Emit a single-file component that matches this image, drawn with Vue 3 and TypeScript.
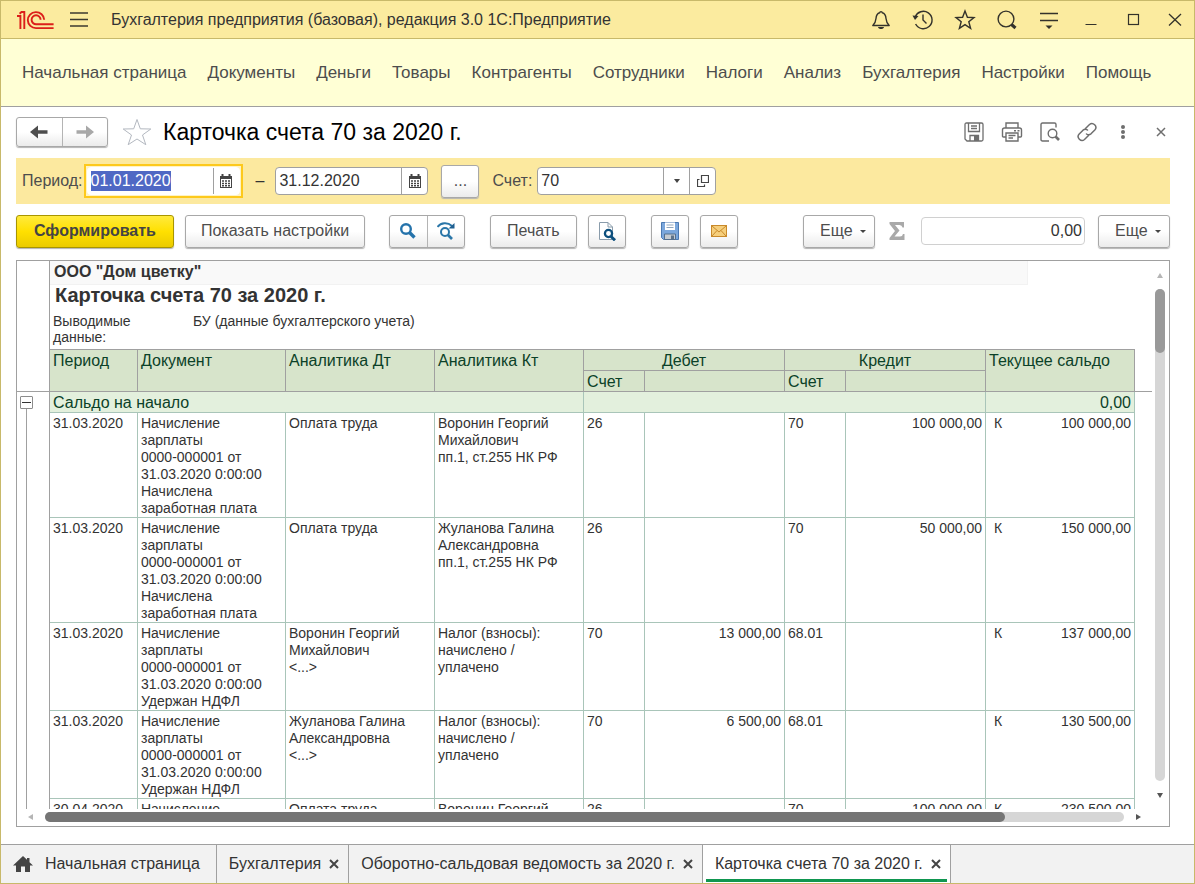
<script setup lang="ts">
import { onMounted, ref } from 'vue'

interface Entry {
  date: string
  doc: string[]
  dt: string[]
  kt: string[]
  debitAccount: string
  debit: string
  creditAccount: string
  credit: string
  side: string
  balance: string
}

const menu: string[] = [
  'Начальная страница', 'Документы', 'Деньги', 'Товары', 'Контрагенты', 'Сотрудники',
  'Налоги', 'Анализ', 'Бухгалтерия', 'Настройки', 'Помощь',
]

const payroll: string[] = [
  'Начисление', 'зарплаты', '0000-000001 от', '31.03.2020 0:00:00', 'Начислена', 'заработная плата',
]
const tax: string[] = [
  'Начисление', 'зарплаты', '0000-000001 от', '31.03.2020 0:00:00', 'Удержан НДФЛ',
]

const entries: Entry[] = [
  {
    date: '31.03.2020', doc: payroll, dt: ['Оплата труда'],
    kt: ['Воронин Георгий', 'Михайлович', 'пп.1, ст.255 НК РФ'],
    debitAccount: '26', debit: '', creditAccount: '70', credit: '100 000,00', side: 'К', balance: '100 000,00',
  },
  {
    date: '31.03.2020', doc: payroll, dt: ['Оплата труда'],
    kt: ['Жуланова Галина', 'Александровна', 'пп.1, ст.255 НК РФ'],
    debitAccount: '26', debit: '', creditAccount: '70', credit: '50 000,00', side: 'К', balance: '150 000,00',
  },
  {
    date: '31.03.2020', doc: tax, dt: ['Воронин Георгий', 'Михайлович', '<...>'],
    kt: ['Налог (взносы):', 'начислено /', 'уплачено'],
    debitAccount: '70', debit: '13 000,00', creditAccount: '68.01', credit: '', side: 'К', balance: '137 000,00',
  },
  {
    date: '31.03.2020', doc: tax, dt: ['Жуланова Галина', 'Александровна', '<...>'],
    kt: ['Налог (взносы):', 'начислено /', 'уплачено'],
    debitAccount: '70', debit: '6 500,00', creditAccount: '68.01', credit: '', side: 'К', balance: '130 500,00',
  },
  {
    date: '30.04.2020', doc: ['Начисление'], dt: ['Оплата труда'],
    kt: ['Воронин Георгий'],
    debitAccount: '26', debit: '', creditAccount: '70', credit: '100 000,00', side: 'К', balance: '230 500,00',
  },
]

const tabs = ref([
  { title: 'Бухгалтерия', active: false },
  { title: 'Оборотно-сальдовая ведомость за 2020 г.', active: false },
  { title: 'Карточка счета 70 за 2020 г.', active: true },
])

const dateFrom = ref('01.01.2020')
const dateTo = ref('31.12.2020')
const account = ref('70')
const total = ref('0,00')
const fromInput = ref<HTMLInputElement | null>(null)

onMounted(() => {
  fromInput.value?.focus()
  fromInput.value?.select()
})
</script>

<template>
  <div class="window">
    <header class="titlebar">
      <svg class="logo" width="38" height="20" viewBox="0 0 38 20" aria-label="1С">
        <g fill="none" stroke="#dc1f1a" stroke-width="1.9">
          <path d="M1 6H4.400V19" />
          <path d="M3.600 3.800L5.500 2H8.300V19" />
          <path d="M28.200 9.800A8.200 8 0 1 0 20.200 18.100H37.600" />
          <path d="M24.600 9.800A4.500 4.500 0 1 0 20.200 14.300H37.600" />
        </g>
      </svg>
      <button class="plain burger" aria-label="Меню">
        <svg width="18" height="15" viewBox="0 0 18 15"><path d="M0 1H18M0 7.5H18M0 14H18" fill="none" stroke="#3c3a30" stroke-width="1.3" /></svg>
      </button>
      <span class="app-title">Бухгалтерия предприятия (базовая), редакция 3.0 1С:Предприятие</span>
      <div class="system">
        <button class="plain" aria-label="Уведомления">
          <svg width="22" height="22" viewBox="0 0 22 22"><path d="M2.8 16.5H19.2C17 14.5 16.3 13 16 9.5C15.8 6 14.5 4.300 12.300 3.700C12.200 2.200 9.800 2.200 9.700 3.700C7.500 4.300 6.200 6 6 9.500C5.700 13 5 14.500 2.800 16.500Z" fill="none" stroke="#33322b" stroke-width="1.4" stroke-linejoin="round" /><path d="M8 18H14C13.500 20.700 8.500 20.700 8 18Z" fill="#33322b" /></svg>
        </button>
        <button class="plain" aria-label="История">
          <svg width="22" height="22" viewBox="0 0 22 22"><path d="M3.200 8A8.700 8.700 0 1 1 3.600 15" fill="none" stroke="#33322b" stroke-width="1.400" /><path d="M11 5.500V11L14.500 14.500" fill="none" stroke="#33322b" stroke-width="1.400" /><path d="M0.500 6.500L6.500 7L3 11Z" fill="#33322b" /></svg>
        </button>
        <button class="plain" aria-label="Избранное">
          <svg width="22" height="22" viewBox="0 0 22 22"><path d="M11 2L13.400 8.300L20 8.600L14.800 12.800L16.600 19.400L11 15.600L5.400 19.400L7.200 12.800L2 8.600L8.600 8.300Z" fill="none" stroke="#33322b" stroke-width="1.400" /></svg>
        </button>
        <button class="plain" aria-label="Поиск">
          <svg width="22" height="22" viewBox="0 0 22 22"><circle cx="10" cy="10" r="7.900" fill="none" stroke="#33322b" stroke-width="1.400" /><path d="M15.500 15.500L19.500 19" stroke="#33322b" stroke-width="3" /></svg>
        </button>
        <button class="plain" aria-label="Настройка панели">
          <svg width="22" height="22" viewBox="0 0 22 22"><path d="M2 4.500H20M2 11.500H20" fill="none" stroke="#33322b" stroke-width="1.500" /><path d="M7.500 16.500H14.500L11 20Z" fill="#33322b" /></svg>
        </button>
        <button class="plain" aria-label="Свернуть">
          <svg width="22" height="22" viewBox="0 0 22 22"><path d="M5.500 15.500H16.500" stroke="#33322b" /></svg>
        </button>
        <button class="plain" aria-label="Развернуть">
          <svg width="22" height="22" viewBox="0 0 22 22"><rect x="6.500" y="5.500" width="10" height="10" fill="none" stroke="#33322b" stroke-width="1.200" /></svg>
        </button>
        <button class="plain" aria-label="Закрыть">
          <svg width="22" height="22" viewBox="0 0 22 22"><path d="M5 5L17 16.500M17 5L5 16.500" stroke="#33322b" stroke-width="1.300" /></svg>
        </button>
      </div>
    </header>

    <nav class="menu">
      <a v-for="item in menu" :key="item" href="#">{{ item }}</a>
    </nav>

    <main class="content">
      <div class="page-head">
        <div class="group nav-group">
          <button aria-label="Назад">
            <svg width="18" height="14" viewBox="0 0 18 14"><path d="M0 7L8 0.500V5.300H17.500V8.700H8V13.500Z" fill="#4d4d4d" /></svg>
          </button>
          <button aria-label="Вперед">
            <svg width="18" height="14" viewBox="0 0 18 14"><path d="M18 7L10 0.500V5.300H0.500V8.700H10V13.500Z" fill="#a8a8a8" /></svg>
          </button>
        </div>
        <button class="plain favorite" aria-label="В избранное">
          <svg width="30" height="28" viewBox="0 0 30 28"><path d="M15 1.500L18.300 10.800L28.800 11L20.500 17L23.800 26.700L15 21L6.200 26.700L9.500 17L1.200 11L11.700 10.800Z" fill="none" stroke="#b3b8c0" /></svg>
        </button>
        <h1>Карточка счета 70 за 2020 г.</h1>
        <div class="page-tools">
          <button class="plain" aria-label="Сохранить">
            <svg width="20" height="20" viewBox="0 0 20 20"><g fill="none" stroke="#6e6e6e" stroke-width="1.300"><path d="M1 2.500Q1 1 2.500 1H17.500Q19 1 19 2.500V17.500Q19 19 17.500 19H3L1 17Z" /><path d="M4.500 1V9.500H15.500V1M7 4H13M7 6.500H13M6 19V13.500H14.500V19" /></g><path d="M10 14H14V19H10Z" fill="#6e6e6e" /></svg>
          </button>
          <button class="plain" aria-label="Печать">
            <svg width="22" height="20" viewBox="0 0 22 20"><g fill="none" stroke="#6e6e6e" stroke-width="1.400"><path d="M5 6V1H17V6M5 15H2.500Q1.500 15 1.500 14V8Q1.500 6 3.500 6H18.500Q20.500 6 20.500 8V14Q20.500 15 19.500 15H17" /><path d="M5 11H17V19H5ZM7.500 13.500H14.500M7.500 16H12" /></g><path d="M13 8H15V9.500H13ZM16.500 8H18.500V9.500H16.500Z" fill="#6e6e6e" /></svg>
          </button>
          <button class="plain" aria-label="Просмотр">
            <svg width="20" height="20" viewBox="0 0 20 20"><path d="M9 19H2.500Q1 19 1 17.500V2.500Q1 1 2.500 1H14.500Q16 1 16 2.500V5.500" fill="none" stroke="#6e6e6e" stroke-width="1.400" /><circle cx="12.500" cy="11.500" r="4.300" fill="none" stroke="#6e6e6e" stroke-width="1.400" /><path d="M15.500 14.500L19 18" stroke="#6e6e6e" stroke-width="2.600" /></svg>
          </button>
          <button class="plain" aria-label="Получить ссылку">
            <svg width="20" height="20" viewBox="0 0 20 20"><g fill="none" stroke="#6e6e6e" stroke-width="1.500" stroke-linecap="round"><path d="M8.500 6.500L12.500 2.500C16 -0.500 21 4.500 17.800 8L14 11.800C12.500 13 11 13 9.500 12" /><path d="M11.500 13.500L7.500 17.500C4 20.500 -1 15.500 2.200 12L6 8.200C7.500 7 9 7 10.500 8" /></g></svg>
          </button>
          <button class="plain" aria-label="Дополнительно">
            <svg width="6" height="16" viewBox="0 0 6 16"><g fill="#6e6e6e"><circle cx="3" cy="3" r="2" /><circle cx="3" cy="8" r="2" /><circle cx="3" cy="13" r="2" /></g></svg>
          </button>
          <button class="plain" aria-label="Закрыть карточку">
            <svg width="10" height="10" viewBox="0 0 10 10"><path d="M1 1L9 9M9 1L1 9" stroke="#6e6e6e" stroke-width="1.500" /></svg>
          </button>
        </div>
      </div>

      <div class="period">
        <label for="from">Период:</label>
        <div class="focus-ring">
          <div class="field">
            <input id="from" ref="fromInput" v-model="dateFrom" type="text" class="date" />
            <button aria-label="Выбрать начало периода">
              <svg width="12" height="14" viewBox="0 0 12 14"><path d="M0 2H12V14H0Z" fill="#444" /><path d="M2.500 0V3M9.500 0V3" stroke="#444" stroke-width="2" /><path d="M1 5H11V13H1Z" fill="#fff" /><path d="M2 7H4M5 7H7M8 7H10M2 9.500H4M5 9.500H7M8 9.500H10M2 11.800H4M5 11.800H7M8 11.800H10" stroke="#444" stroke-width="1.500" /></svg>
            </button>
          </div>
        </div>
        <label class="dash" for="to">–</label>
        <div class="field">
          <input id="to" v-model="dateTo" type="text" class="date" />
          <button aria-label="Выбрать конец периода">
            <svg width="12" height="14" viewBox="0 0 12 14"><path d="M0 2H12V14H0Z" fill="#444" /><path d="M2.500 0V3M9.500 0V3" stroke="#444" stroke-width="2" /><path d="M1 5H11V13H1Z" fill="#fff" /><path d="M2 7H4M5 7H7M8 7H10M2 9.500H4M5 9.500H7M8 9.500H10M2 11.800H4M5 11.800H7M8 11.800H10" stroke="#444" stroke-width="1.500" /></svg>
          </button>
        </div>
        <button class="btn icon dots">...</button>
        <label for="account">Счет:</label>
        <div class="field account">
          <input id="account" v-model="account" type="text" class="date" />
          <button aria-label="Выбрать счет"><svg width="8" height="4" viewBox="0 0 8 4"><path d="M1 0H7L4 4Z" fill="#444" /></svg></button>
          <button aria-label="Открыть счет">
            <svg width="12" height="12" viewBox="0 0 12 12"><path d="M4.500 0.500H11.500V7.500H4.500ZM2.500 4.500H0.500V11.500H7.500V9.500" fill="none" stroke="#444" stroke-width="1.200" /></svg>
          </button>
        </div>
      </div>

      <div class="toolbar">
        <button class="btn primary">Сформировать</button>
        <button class="btn settings">Показать настройки</button>
        <div class="group find-group">
          <button aria-label="Найти">
            <svg width="16" height="16" viewBox="0 0 16 16"><circle cx="6" cy="6" r="4.800" fill="none" stroke="#2573ab" stroke-width="2.400" /><path d="M9.500 9.500L14.500 14.500" stroke="#2573ab" stroke-width="3.400" /></svg>
          </button>
          <button aria-label="Найти далее">
            <svg width="18" height="18" viewBox="0 0 18 18"><circle cx="8" cy="10" r="4" fill="none" stroke="#2a76a8" stroke-width="2" /><path d="M11 13L15 17" stroke="#2a76a8" stroke-width="2.600" /><path d="M0.500 5C4 0.500 10.500 0 15 4" fill="none" stroke="#2a76a8" stroke-width="1.900" /><path d="M17.500 1V6.500H11.500Z" fill="#1f5f90" /></svg>
          </button>
        </div>
        <button class="btn apart">Печать</button>
        <button class="btn icon" aria-label="Предварительный просмотр">
          <svg width="18" height="20" viewBox="0 0 18 20"><path d="M1.500 1.500H10L14.500 6V18.500H1.500Z" fill="#fff" stroke="#8a9cab" /><path d="M10 1.500V6H14.500" fill="none" stroke="#8a9cab" /><circle cx="10.500" cy="12.500" r="3.600" fill="#fff" stroke="#0c4f7d" stroke-width="2.300" /><path d="M13 15.500L17 19.300" stroke="#0c4f7d" stroke-width="3" /></svg>
        </button>
        <button class="btn icon apart" aria-label="Сохранить отчет">
          <svg width="18" height="18" viewBox="0 0 18 18"><path d="M0.500 0.500H17.500V17.500H2.500L0.500 15.500Z" fill="#7ba7dc" stroke="#4b79b2" /><path d="M4 0.500H14V8H4Z" fill="#fff" /><path d="M5.500 3H12.500M5.500 5.500H12.500" stroke="#91a6bd" /><path d="M3.500 12H14.500V17.500H3.500Z" fill="#c5cbd1" stroke="#55708f" /><path d="M10 13.500H13V17H10Z" fill="#5e7389" /></svg>
        </button>
        <button class="btn icon" aria-label="Отправить по почте">
          <svg width="16" height="12" viewBox="0 0 16 12"><rect x="0.500" y="0.500" width="15" height="11" fill="#f6cf7c" stroke="#c98a2b" /><path d="M1 1L8 7L15 1M1 11L6 5.500M15 11L10 5.500" fill="none" stroke="#c98a2b" /></svg>
        </button>
        <div class="toolbar-right">
          <button class="btn more">Еще <svg width="6" height="3" viewBox="0 0 6 3"><path d="M0 0H6L3 3Z" fill="#444" /></svg></button>
          <label class="sigma" for="total" aria-label="Сумма">
            <svg width="16" height="18" viewBox="0 0 16 18"><path d="M0.500 0H15V5.500H13.500Q13 3 10.500 3H6L10.500 8.500L5.500 14.500H11Q13.500 14.500 14 12H15.500V18H0.500V16L6 9L0.500 2Z" fill="#a9a9a9" /></svg>
          </label>
          <input id="total" v-model="total" type="text" class="total" />
          <button class="btn more">Еще <svg width="6" height="3" viewBox="0 0 6 3"><path d="M0 0H6L3 3Z" fill="#444" /></svg></button>
        </div>
      </div>

      <section class="sheet">
        <div class="pane">
          <div class="heading">
            <div class="org">ООО "Дом цветку"</div>
            <h2>Карточка счета 70 за 2020 г.</h2>
            <div class="info">
              <span>Выводимые данные:</span>
              <span>БУ (данные бухгалтерского учета)</span>
            </div>
          </div>
          <table>
            <colgroup>
              <col class="c-gutter" /><col class="c-date" /><col class="c-doc" /><col class="c-an" /><col class="c-an" />
              <col class="c-acc" /><col class="c-sum" /><col class="c-acc" /><col class="c-sum" /><col class="c-an" /><col class="c-tail" />
            </colgroup>
            <thead>
              <tr>
                <td rowspan="2" class="gutter-head"></td>
                <th rowspan="2">Период</th>
                <th rowspan="2">Документ</th>
                <th rowspan="2">Аналитика Дт</th>
                <th rowspan="2">Аналитика Кт</th>
                <th colspan="2" class="center">Дебет</th>
                <th colspan="2" class="center">Кредит</th>
                <th rowspan="2">Текущее сальдо</th>
                <td rowspan="2" class="tail-head"></td>
              </tr>
              <tr class="second">
                <th>Счет</th>
                <th></th>
                <th>Счет</th>
                <th></th>
              </tr>
            </thead>
            <tbody>
              <tr class="opening">
                <td :rowspan="entries.length + 1" class="gutter">
                  <button class="collapse" aria-label="Свернуть группу"></button>
                  <div class="tree"></div>
                </td>
                <td colspan="4">Сальдо на начало</td>
                <td colspan="4"></td>
                <td class="num">0,00</td>
              </tr>
              <tr v-for="(row, i) in entries" :key="i">
                <td>{{ row.date }}</td>
                <td><div v-for="(line, n) in row.doc" :key="n">{{ line }}</div></td>
                <td><div v-for="(line, n) in row.dt" :key="n">{{ line }}</div></td>
                <td><div v-for="(line, n) in row.kt" :key="n">{{ line }}</div></td>
                <td>{{ row.debitAccount }}</td>
                <td class="num">{{ row.debit }}</td>
                <td>{{ row.creditAccount }}</td>
                <td class="num">{{ row.credit }}</td>
                <td><div class="balance"><span>{{ row.side }}</span><span>{{ row.balance }}</span></div></td>
              </tr>
            </tbody>
          </table>
        </div>
        <div class="vbar">
          <button class="plain" aria-label="Вверх"><svg width="6" height="5" viewBox="0 0 6 5"><path d="M0 5L3 0L6 5Z" fill="#b5b5b5" /></svg></button>
          <div class="track"><div class="thumb"></div></div>
          <button class="plain" aria-label="Вниз"><svg width="6" height="5" viewBox="0 0 6 5"><path d="M0 0H6L3 5Z" fill="#555" /></svg></button>
        </div>
        <div class="hbar">
          <button class="plain" aria-label="Влево"><svg width="5" height="6" viewBox="0 0 5 6"><path d="M5 0V6L0 3Z" fill="#b5b5b5" /></svg></button>
          <div class="track"><div class="thumb"></div></div>
          <button class="plain" aria-label="Вправо"><svg width="5" height="6" viewBox="0 0 5 6"><path d="M0 0V6L5 3Z" fill="#555" /></svg></button>
        </div>
      </section>
    </main>

    <footer class="tabs">
      <div class="tab home">
        <a href="#">
          <svg width="20" height="17" viewBox="0 0 20 17"><path d="M10 0L0 9.500H3V16H8V10.500H12V16H17V9.500H20L16.500 6.200V2H14V3.800Z" fill="#444" /></svg>
          Начальная страница
        </a>
      </div>
      <div v-for="tab in tabs" :key="tab.title" class="tab" :class="{ active: tab.active }">
        <a href="#">{{ tab.title }}</a>
        <button class="plain" :aria-label="'Закрыть ' + tab.title">
          <svg width="10" height="10" viewBox="0 0 10 10"><path d="M1 1L9 9M9 1L1 9" stroke="#444" stroke-width="2" /></svg>
        </button>
      </div>
    </footer>
  </div>
</template>

<style>
body {
  background: #fff;
}
</style>

<style scoped>
.window {
  box-sizing: border-box;
  height: 100vh;
  display: flex;
  flex-direction: column;
  border: 1px solid #c8b96a;
  background: #fff;
  color: #333;
  font: 16px/20px "Liberation Sans", Arial, sans-serif;
  overflow: hidden;
}
.window * {
  box-sizing: border-box;
}
button,
input {
  font: inherit;
  color: inherit;
  margin: 0;
  padding: 0;
}
a {
  color: inherit;
  text-decoration: none;
}
svg {
  display: block;
  flex: none;
}
.plain {
  display: flex;
  align-items: center;
  justify-content: center;
  border: 0;
  background: none;
}
.titlebar {
  display: flex;
  align-items: center;
  flex: none;
  height: 38px;
  padding-left: 15px;
  background: #fbeb9f;
  border-bottom: 1px solid #c8b96a;
}
.burger {
  margin: 0 23px 0 16px;
}
.app-title {
  white-space: nowrap;
}
.system {
  display: flex;
  gap: 4px;
  margin-left: auto;
}
.system button {
  width: 38px;
  height: 36px;
}
.menu {
  display: flex;
  flex: none;
  align-items: center;
  gap: 21px;
  height: 68px;
  padding-left: 21px;
  background: #ffffd5;
  border-bottom: 1px solid #a0a0a0;
  color: #4d4d4d;
  font-size: 17px;
  white-space: nowrap;
}
.content {
  flex: 1;
  min-height: 0;
  display: flex;
  flex-direction: column;
  padding: 0 24px 17px 15px;
}
.page-head {
  display: flex;
  align-items: center;
  flex: none;
  height: 51px;
  padding-bottom: 2px;
}
.group {
  display: flex;
  border: 1px solid #a8a8a8;
  border-radius: 3px;
  background: linear-gradient(#fff 50%, #ebebeb);
  box-shadow: 0 1px 1px #b4b4b4;
}
.group button {
  flex: 1;
  display: flex;
  align-items: center;
  justify-content: center;
  border: 0;
  background: none;
}
.group button + button {
  border-left: 1px solid #b4b4b4;
}
.nav-group {
  width: 92px;
  height: 30px;
}
.favorite {
  margin: 0 11px 0 14px;
}
h1 {
  margin: 0;
  font-size: 23px;
  line-height: 28px;
  font-weight: 400;
  color: #000;
  white-space: nowrap;
}
.page-tools {
  display: flex;
  align-items: center;
  gap: 17px;
  margin: 0 3px 0 auto;
}
.page-tools button:nth-last-child(-n + 2) {
  width: 12px;
  margin-left: 3px;
}
.page-tools button:last-child {
  margin-left: 9px;
}
.period {
  display: flex;
  align-items: center;
  flex: none;
  height: 46px;
  padding-left: 6px;
  background: #fce99f;
}
.period label {
  color: #4d4d4d;
}
.focus-ring {
  margin-left: 1px;
  padding: 1px;
  border: 2px solid #fdc91c;
  background: #fff3c4;
}
.focus-ring .field {
  border-color: #fff;
}
.period .dash {
  margin: 0 11px 0 13px;
  color: #333;
}
.field {
  display: flex;
  height: 28px;
  border: 1px solid #a0a0a0;
  border-radius: 4px;
  background: #fff;
  overflow: hidden;
}
.date {
  width: 125px;
  padding-left: 3px;
  border: 0;
  outline: 0;
  background: none;
}
.date::selection {
  background: #4f68c4;
  color: #fff;
}
.field button {
  display: flex;
  align-items: center;
  justify-content: center;
  width: 26px;
  border: 0;
  border-left: 1px solid #a0a0a0;
  background: none;
}
.account {
  margin-left: 5px;
}
.btn {
  display: flex;
  align-items: center;
  justify-content: center;
  flex: none;
  height: 33px;
  padding: 0 16px;
  border: 1px solid #a8a8a8;
  border-radius: 3px;
  background: linear-gradient(#fff 50%, #ebebeb);
  box-shadow: 0 1px 1px #b4b4b4;
  color: #4d4d4d;
  white-space: nowrap;
}
.btn.icon {
  width: 38px;
  padding: 0;
}
.dots {
  margin: 0 13px;
}
.toolbar {
  display: flex;
  align-items: center;
  flex: none;
  gap: 11px;
  height: 56px;
  padding-bottom: 2px;
}
.btn.primary {
  padding: 0 17px;
  border-color: #a89500;
  background: linear-gradient(#ffea3d, #ffe000 50%, #ebcb00);
  color: #444;
  font-weight: 700;
}
.btn.settings {
  padding: 0 15px;
}
.find-group {
  width: 76px;
  height: 33px;
  margin-left: 13px;
}
.apart {
  margin-left: 14px;
}
.toolbar-right {
  display: flex;
  align-items: center;
  margin-left: auto;
}
.more {
  width: 72px;
  padding: 0 8px 0 16px;
  justify-content: space-between;
}
.sigma {
  margin: 0 16px 0 14px;
}
.total {
  width: 164px;
  height: 28px;
  margin-right: 13px;
  padding-right: 2px;
  border: 1px solid #d0d0d0;
  border-radius: 4px;
  background: #fff;
  text-align: right;
}
.sheet {
  flex: 1;
  min-height: 0;
  display: grid;
  grid-template: minmax(0, 1fr) 17px / minmax(0, 1fr) 17px;
  border: 1px solid #a0a0a0;
}
.pane {
  overflow: hidden;
}
.heading {
  height: 88px;
  margin-left: 32px;
  border-left: 1px solid #a0a0a0;
  color: #333;
}
.org {
  width: 978px;
  height: 24px;
  padding-left: 4px;
  background: #f9f9f9;
  border: 2px solid #f2f2f2;
  border-width: 0 1px 1px 0;
  font-weight: 700;
  line-height: 22px;
}
h2 {
  margin: 0;
  padding-left: 5px;
  font-size: 20px;
  line-height: 20px;
}
.info {
  display: grid;
  grid-template-columns: 100px 1fr;
  gap: 40px;
  padding: 8px 0 0 3px;
  font-size: 14px;
  line-height: 16px;
}
table {
  width: 1135px;
  table-layout: fixed;
  border-collapse: separate;
  border-spacing: 0;
  font-size: 14px;
  line-height: 17px;
}
.c-gutter { width: 33px; }
.c-date { width: 88px; }
.c-doc { width: 148px; }
.c-an { width: 149px; }
.c-acc { width: 61px; }
.c-sum { width: 140px; }
.c-tail { width: 17px; }
th,
td {
  padding: 2px 3px 0;
  border: 0 solid #a9c5b9;
  border-width: 0 1px 1px 0;
  vertical-align: top;
  text-align: left;
  white-space: nowrap;
}
th {
  height: 21px;
  padding-top: 1px;
  background: #d7e4cb;
  border-color: #a0a0a0;
  color: #0b4128;
  font-size: 16px;
  line-height: 19px;
  font-weight: 400;
}
thead tr:first-child th {
  height: 22px;
  border-top-width: 1px;
}
th.center {
  text-align: center;
}
.gutter-head,
.gutter {
  padding: 0;
  border-color: #a0a0a0;
}
.gutter {
  padding: 4px 0 0 3px;
  border-bottom: 0;
}
.tail-head {
  border-color: #a0a0a0;
  border-right: 0;
}
.opening td:not(.gutter) {
  height: 21px;
  padding-top: 1px;
  background: #e3f0dd;
  color: #0b4128;
  font-size: 16px;
  line-height: 19px;
}
.num {
  text-align: right;
}
.tree {
  height: 402px;
  margin-left: 6px;
  border-left: 1px solid #a0a0a0;
}
.collapse {
  display: flex;
  align-items: center;
  justify-content: center;
  width: 13px;
  height: 13px;
  border: 1px solid #8c8c8c;
  border-radius: 1px;
  background: #fff;
}
.collapse::before {
  content: "";
  width: 9px;
  height: 1px;
  background: #333;
}
.balance {
  display: flex;
  justify-content: space-between;
  padding-left: 5px;
}
.vbar {
  display: flex;
  flex-direction: column;
  align-items: center;
  padding: 10px 1px 10px 0;
}
.vbar .plain {
  width: 10px;
  height: 8px;
}
.vbar .track {
  flex: 1;
  width: 10px;
  margin: 10px 0;
  border-radius: 5px;
  background: #d6d6d6;
}
.vbar .thumb {
  height: 13%;
  border-radius: 5px;
  background: #999;
}
.hbar {
  grid-column: 1 / -1;
  display: flex;
  align-items: center;
  padding: 0 26px 1px 9px;
}
.hbar .plain {
  width: 9px;
  height: 10px;
}
.hbar .track {
  flex: 1;
  height: 10px;
  margin: 0 10px;
  border-radius: 5px;
  background: #d6d6d6;
}
.hbar .thumb {
  width: 89%;
  height: 10px;
  border-radius: 5px;
  background: #757575;
}
.tabs {
  display: flex;
  flex: none;
  height: 39px;
  border-top: 1px solid #a0a0a0;
  background: #f2f2f2;
  white-space: nowrap;
}
.tab {
  display: flex;
  align-items: center;
  gap: 8px;
  padding: 0 9px 0 12px;
  border-right: 1px solid #a0a0a0;
}
.tab a {
  display: flex;
  align-items: center;
  gap: 12px;
}
.home {
  padding-right: 16px;
}
.active {
  position: relative;
  background: #fff;
}
.active::after {
  content: "";
  position: absolute;
  left: 3px;
  right: 3px;
  bottom: 1px;
  height: 3px;
  background: #0f9650;
}
</style>
